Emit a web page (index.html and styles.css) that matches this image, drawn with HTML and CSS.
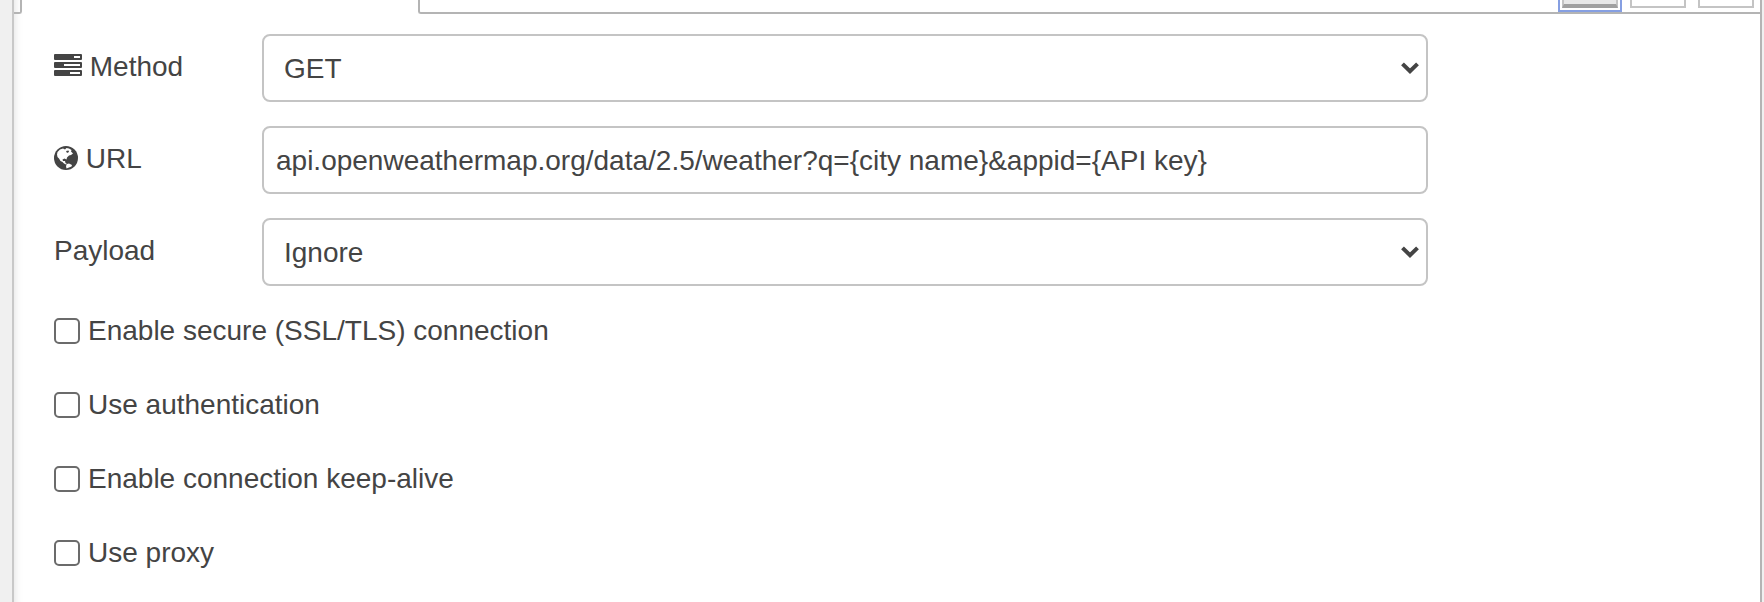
FILE: index.html
```html
<!DOCTYPE html>
<html lang="en">
<head>
<meta charset="utf-8">
<title>Edit http request node</title>
<link rel="stylesheet" href="styles.css">
</head>
<body>
<main class="panel">
  <header class="tabs">
    <div class="tab-before"></div>
    <div class="tab-active"></div>
    <div class="tab-rest">
      <button class="tool tool-selected" type="button" aria-label="Properties"><span class="tool-face"></span></button>
      <button class="tool" type="button" aria-label="Description"></button>
      <button class="tool" type="button" aria-label="Appearance"></button>
    </div>
  </header>
  <form class="form">
    <div class="row">
      <label class="label" for="method">
        <svg class="icon-tasks" viewBox="0 0 28 22" aria-hidden="true">
          <path fill-rule="evenodd" d="M1 0H27Q28 0 28 1V5Q28 6 27 6H1Q0 6 0 5V1Q0 0 1 0ZM20 2V4H26V2ZM1 8H27Q28 8 28 9V13Q28 14 27 14H1Q0 14 0 13V9Q0 8 1 8ZM10 10V12H26V10ZM1 16H27Q28 16 28 17V21Q28 22 27 22H1Q0 22 0 21V17Q0 16 1 16ZM16 18V20H26V18Z"/>
        </svg>
        Method
      </label>
      <div class="select">
        <select class="field" id="method"><option>GET</option></select>
        <svg class="chevron" viewBox="0 0 18 12" aria-hidden="true"><path d="M1.5 1.8 9 9.2 16.5 1.8"/></svg>
      </div>
    </div>
    <div class="row">
      <label class="label" for="url">
        <svg class="icon-globe" viewBox="0 0 24 24" aria-hidden="true">
          <circle cx="12" cy="12" r="12"/>
          <path class="land" d="M3.500 6 6 3.500 9 2.500 11 3.500 12.500 2 15 2.500 17.500 4 17 5.500 19 7.500 17 9 15 9.500 13 11.500 12.500 13.500 10.500 12.500 8.500 13.500 9 15 11 15 11.500 17 13 18 12 18.500 10 17.500 8.500 16 6.500 15 5 12.500 3.500 11 3 8.500ZM13 18 15 17.500 18 19 17.500 20.500 15 21.500 12.500 22.500 12 20Z"/>
          <path d="M12 5 14.500 4.500 15 6 13 7Z"/>
        </svg>
        URL
      </label>
      <input class="field field-text" id="url" type="text" value="api.openweathermap.org/data/2.5/weather?q={city name}&amp;appid={API key}">
    </div>
    <div class="row">
      <label class="label" for="payload">Payload</label>
      <div class="select">
        <select class="field" id="payload"><option>Ignore</option></select>
        <svg class="chevron" viewBox="0 0 18 12" aria-hidden="true"><path d="M1.5 1.8 9 9.2 16.5 1.8"/></svg>
      </div>
    </div>
    <div class="checks">
      <label class="check"><input type="checkbox">Enable secure (SSL/TLS) connection</label>
      <label class="check"><input type="checkbox">Use authentication</label>
      <label class="check"><input type="checkbox">Enable connection keep-alive</label>
      <label class="check"><input type="checkbox">Use proxy</label>
    </div>
  </form>
</main>
</body>
</html>
```

FILE: styles.css
```css
* { box-sizing: border-box; }

body {
  margin: 0;
  min-height: 100vh;
  display: flex;
  padding: 0 2px 0 12px;
  background: #f0f0f0;
  color: #444;
  font: 28px/40px "Liberation Sans", Arial, sans-serif;
}

.panel {
  flex: 1;
  border-left: 2px solid #c8c8c8;
  border-right: 2px solid #b4b4b4;
  background: #fff;
  box-shadow: inset 10px 0 10px -10px #ddd;
}

/* Tab strip, cut off by the top of the view */
.tabs {
  display: flex;
  height: 14px;
}

.tab-before {
  width: 8px;
  border-right: 2px solid #b4b4b4;
  border-bottom: 2px solid #b4b4b4;
  border-bottom-right-radius: 3px;
}

.tab-active { width: 396px; }

.tab-rest {
  flex: 1;
  display: flex;
  justify-content: flex-end;
  gap: 12px;
  padding-right: 6px;
  border-left: 2px solid #b4b4b4;
  border-bottom: 2px solid #b4b4b4;
  border-bottom-left-radius: 3px;
}

.tool {
  width: 56px;
  height: 8px;
  padding: 0;
  border: 2px solid #c4c4c4;
  border-top: 0;
  background: #fff;
}

.tool-selected {
  width: 64px;
  height: 12px;
  margin-right: -4px;
  padding: 0 2px 2px;
  border-color: #869fe2;
}

.tool-face {
  display: block;
  height: 8px;
  border: 2px solid #c4c4c4;
  border-top: 0;
  border-bottom: 4px solid #a0a0a0;
  background: #e8e8e8;
}

.form { padding: 20px 40px; }

.row {
  display: flex;
  align-items: flex-start;
  margin-bottom: 24px;
}

.label {
  width: 208px;
  padding-top: 13px;
}

.icon-tasks,
.icon-globe { fill: #444; }

.icon-tasks { width: 28px; height: 22px; }

.icon-globe { width: 24px; height: 24px; vertical-align: -2px; }

.icon-globe .land { fill: #fff; }

.field {
  width: 100%;
  height: 68px;
  margin: 0;
  padding: 2px 20px 0;
  appearance: none;
  border: 2px solid #c4c4c4;
  border-radius: 8px;
  background: #fff;
  color: inherit;
  font: inherit;
}

.field-text {
  width: 70%;
  padding: 2px 12px 0;
}

.select {
  position: relative;
  width: 70%;
  display: flex;
}

.chevron {
  position: absolute;
  right: 9px;
  top: 28px;
  width: 18px;
  height: 12px;
  fill: none;
  stroke: #444;
  stroke-width: 4;
  pointer-events: none;
}

.checks {
  display: grid;
  justify-items: start;
  gap: 32px;
}

.check {
  display: flex;
  align-items: center;
  gap: 8px;
  height: 42px;
}

.check input {
  width: 26px;
  height: 26px;
  margin: 0;
  appearance: none;
  border: 2px solid #6b6b6b;
  border-radius: 5px;
  background: #fff;
}

.check input:checked { background: #6b6b6b; }
```
